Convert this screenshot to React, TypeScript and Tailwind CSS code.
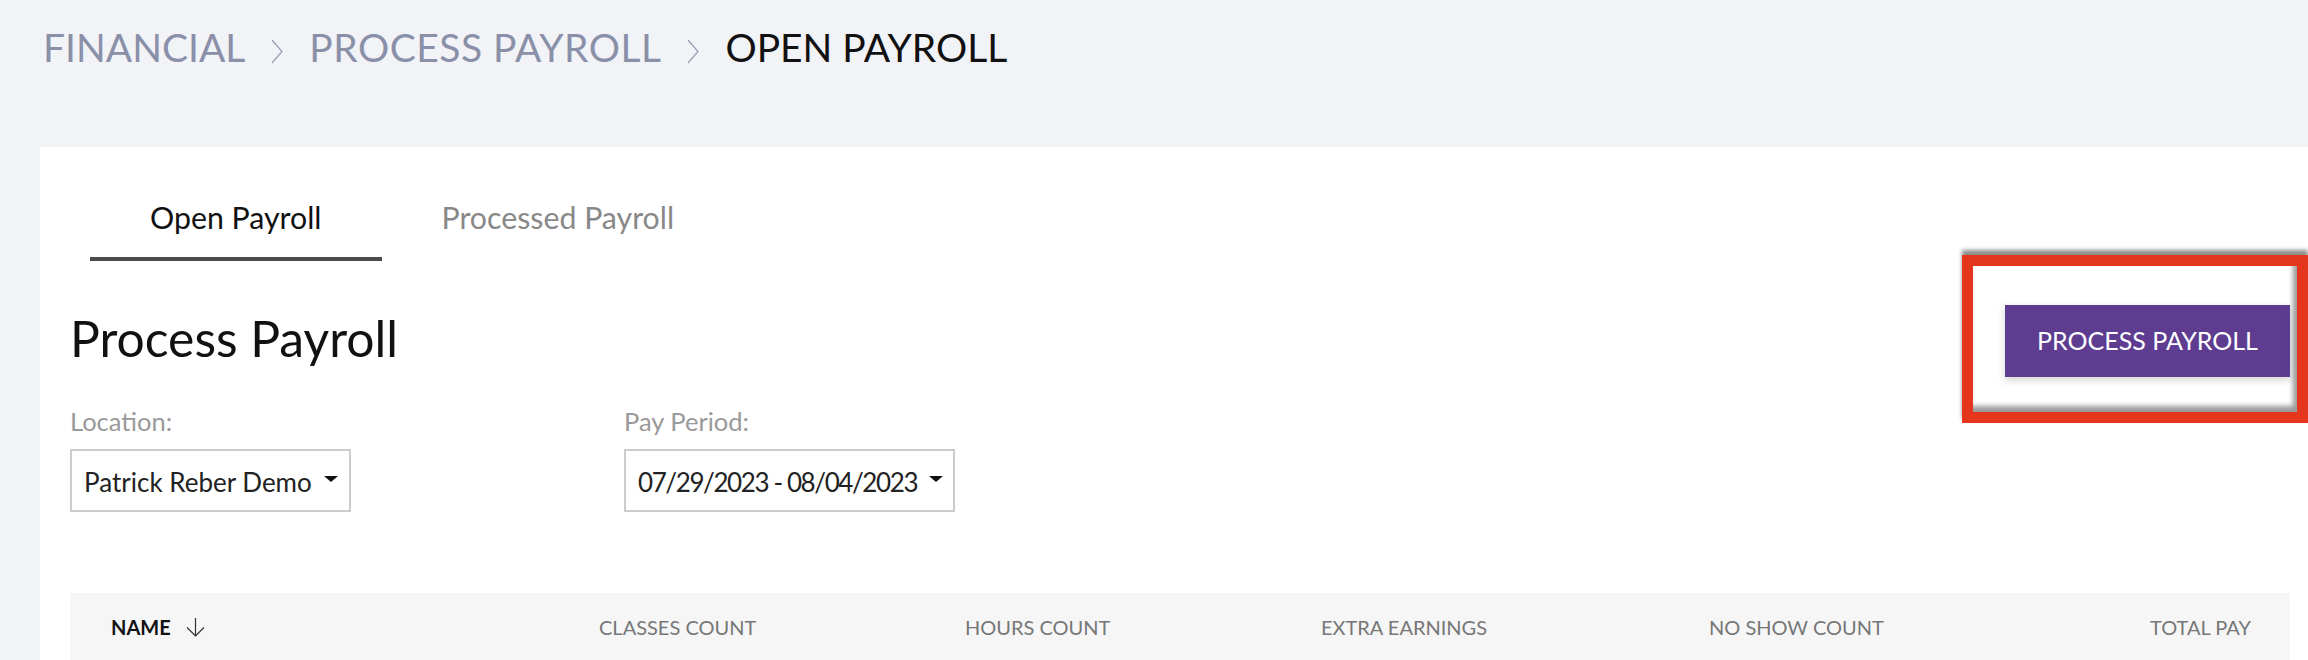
import React, { useState } from 'react';

const font = { fontFamily: 'Lato, "Noto Sans", sans-serif' };

// breadcrumb separator
const Chevron = () => (
  <svg width="12" height="25" viewBox="0 0 12 25" className="mt-[8px]">
    <polyline points="1,1 11,12.5 1,24" fill="none" stroke="#9aa0b4" strokeWidth="1.3" />
  </svg>
);

const DownArrow = () => (
  <svg width="19" height="19" viewBox="0 0 19 19">
    <line x1="9.5" y1="0" x2="9.5" y2="18" stroke="#333" strokeWidth="1.2" />
    <polyline points="1,9.5 9.5,18 18,9.5" fill="none" stroke="#333" strokeWidth="1.2" />
  </svg>
);

const Caret = () => (
  <span className="ml-[12px] mb-[6px] w-0 h-0 shrink-0 border-l-[7px] border-r-[7px] border-t-[6px] border-l-transparent border-r-transparent border-t-[#111]" />
);

type SelectProps = { label: string; value: string; width: string; tight?: boolean };

const FakeSelect: React.FC<SelectProps> = ({ label, value, width, tight }) => (
  <div className="flex flex-col">
    <span className="text-[25.5px] leading-[32px] text-[#999]">{label}</span>
    <div className={`mt-[12px] h-[63px] border-2 border-[#cccccc] bg-white pl-[12px] pt-[15px] ${width}`}>
      <div className="flex items-center whitespace-nowrap leading-[32px] text-[26px] text-[#222]">
        <span className={tight ? 'tracking-[-1.4px]' : ''}>{value}</span>
        <Caret />
      </div>
    </div>
  </div>
);

export default function App() {
  //選択中のタブ
  const [tab, setTab] = useState<'open' | 'processed'>('open');

  const columns = ['CLASSES COUNT', 'HOURS COUNT', 'EXTRA EARNINGS', 'NO SHOW COUNT', 'TOTAL PAY'];

  return (
    <div className="w-[2308px] h-[660px] overflow-hidden bg-[#f2f3f7]" style={font}>
      {/* パンくず */}
      <div className="pt-[24px] pl-[43px] flex items-center gap-[26px] text-[39px] leading-[46px]">
        <span className="text-[#8a90a8]">FINANCIAL</span>
        <Chevron />
        <span className="text-[#8a90a8] tracking-[0.5px]">PROCESS PAYROLL</span>
        <Chevron />
        <span className="text-[#111]">OPEN PAYROLL</span>
      </div>

      {/* カード */}
      <div className="mt-[77px] ml-[40px] w-[2280px] bg-white px-[30px] pt-[51px]">
        <div className="flex pl-[20px]">
          <button
            onClick={() => setTab('open')}
            className={`px-[60px] pb-[21px] border-b-4 text-[30.3px] leading-[38px] ${tab === 'open' ? 'border-[#4a4a4a] text-[#111]' : 'border-transparent text-[#888]'}`}
          >
            Open Payroll
          </button>
          <button
            onClick={() => setTab('processed')}
            className={`px-[60px] pb-[21px] border-b-4 text-[30.3px] leading-[38px] ${tab === 'processed' ? 'border-[#4a4a4a] text-[#111]' : 'border-transparent text-[#888]'}`}
          >
            Processed Payroll
          </button>
        </div>

        <div className="mt-[44px] flex justify-between items-start">
          <h1 className="mt-[5px] text-[49.8px] leading-[56px] text-[#111]">Process Payroll</h1>
          <div className="relative">
            <button className="w-[285px] h-[72px] bg-[#5e3d91] text-white text-[25px] shadow-[0_3px_8px_rgba(0,0,0,0.18)]">
              PROCESS PAYROLL
            </button>
            {/* 注釈の赤枠 */}
            <div className="absolute left-[-43px] right-[-18px] top-[-50px] bottom-[-46px] border-[11px] border-[#e4361c] shadow-[0_-5px_4px_rgba(0,0,0,0.45),inset_-4px_-6px_5px_rgba(0,0,0,0.4)] pointer-events-none" />
          </div>
        </div>

        <div className="mt-[28px] flex">
          <div className="w-[554px]">
            <FakeSelect label="Location:" value="Patrick Reber Demo" width="w-[281px]" />
          </div>
          <FakeSelect label="Pay Period:" value="07/29/2023 - 08/04/2023" width="w-[331px]" tight />
        </div>

        {/* テーブルヘッダー */}
        <div className="mt-[81px] h-[96px] bg-[#f6f6f6] pl-[41px] pt-[22px] grid items-start grid-cols-[488px_366px_356px_388px_441px_1fr] text-[20px] leading-[24px] text-[#777]">
          <div className="flex items-center gap-[15px] font-bold text-[#111]">
            <span>NAME</span>
            <DownArrow />
          </div>
          {columns.map((c) => (
            <div key={c} className="whitespace-nowrap">{c}</div>
          ))}
        </div>
      </div>
    </div>
  );
}
